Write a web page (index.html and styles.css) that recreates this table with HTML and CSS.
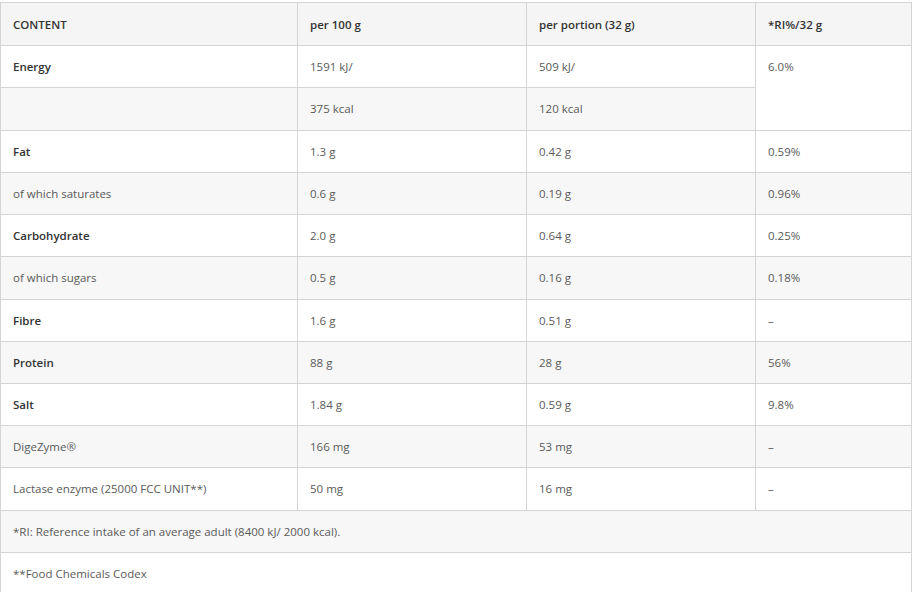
FILE: index.html
```html
<!DOCTYPE html>
<html>
<head>
<meta charset="utf-8">
<link rel="stylesheet" href="styles.css">
</head>
<body>
<table class="nutri">
  <colgroup>
    <col class="c1"><col class="c2"><col class="c3"><col class="c4">
  </colgroup>
  <thead>
    <tr class="head">
      <th>CONTENT</th><th>per 100 g</th><th>per portion (32 g)</th><th>*RI%/32 g</th>
    </tr>
  </thead>
  <tbody>
    <tr><td class="b">Energy</td><td>1591 kJ/</td><td>509 kJ/</td><td rowspan="2" class="top">6.0%</td></tr>
    <tr class="alt"><td></td><td>375 kcal</td><td>120 kcal</td></tr>
    <tr><td class="b">Fat</td><td>1.3 g</td><td>0.42 g</td><td>0.59%</td></tr>
    <tr class="alt"><td>of which saturates</td><td>0.6 g</td><td>0.19 g</td><td>0.96%</td></tr>
    <tr><td class="b">Carbohydrate</td><td>2.0 g</td><td>0.64 g</td><td>0.25%</td></tr>
    <tr class="alt"><td>of which sugars</td><td>0.5 g</td><td>0.16 g</td><td>0.18%</td></tr>
    <tr><td class="b">Fibre</td><td>1.6 g</td><td>0.51 g</td><td>–</td></tr>
    <tr class="alt"><td class="b">Protein</td><td>88 g</td><td>28 g</td><td>56%</td></tr>
    <tr><td class="b">Salt</td><td>1.84 g</td><td>0.59 g</td><td>9.8%</td></tr>
    <tr class="alt"><td>DigeZyme®</td><td>166 mg</td><td>53 mg</td><td>–</td></tr>
    <tr><td>Lactase enzyme (25000 FCC UNIT**)</td><td>50 mg</td><td>16 mg</td><td>–</td></tr>
    <tr class="alt"><td colspan="4">*RI: Reference intake of an average adult (8400 kJ/ 2000 kcal).</td></tr>
    <tr><td colspan="4">**Food Chemicals Codex</td></tr>
  </tbody>
</table>
</body>
</html>
```

FILE: styles.css
```css
html, body {
  margin: 0;
  padding: 0;
  background: #ffffff;
}
body {
  padding-top: 2px;
  font-family: "Open Sans", "Liberation Sans", sans-serif;
  font-size: 11.5px;
  color: #5a5a5a;
}
.nutri {
  width: 911px;
  border-collapse: collapse;
  table-layout: fixed;
}
.c1 { width: 297px; }
.c2 { width: 229px; }
.c3 { width: 229px; }
.c4 { width: 156px; }
.nutri th,
.nutri td {
  border: 1px solid #d4d4d4;
  padding: 12px 12px;
  line-height: 17.22px;
  height: 17.22px;
  text-align: left;
  vertical-align: middle;
  font-weight: 400;
}
.nutri th {
  font-weight: 600;
  color: #333333;
  padding-top: 12.5px;
  padding-bottom: 12.5px;
}
.head {
  background: #f5f5f5;
}
.alt {
  background: #f7f7f7;
}
.nutri td.b {
  font-weight: 600;
  color: #333333;
}
.nutri td.top {
  vertical-align: top;
  background: #ffffff;
}
```
